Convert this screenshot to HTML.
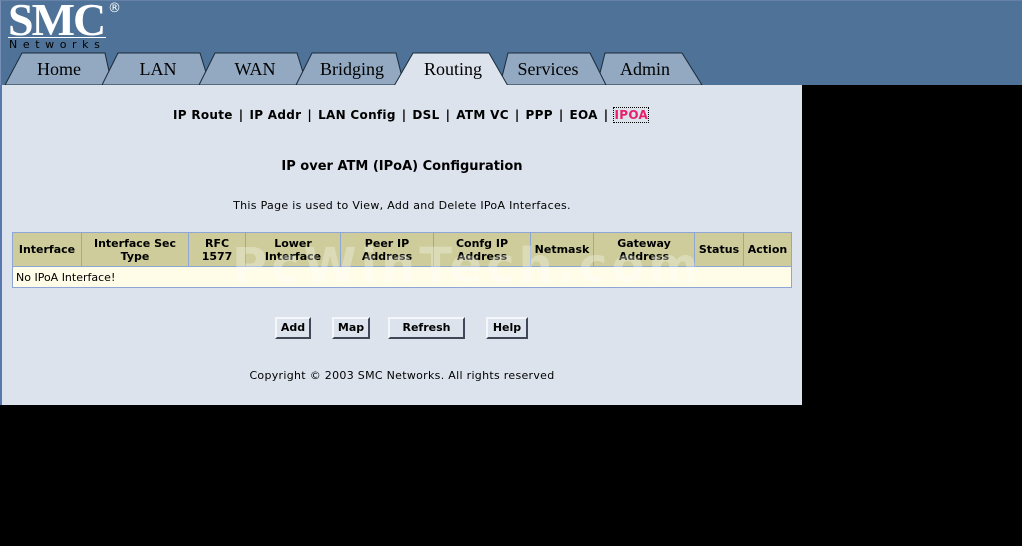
<!DOCTYPE html>
<html><head><meta charset="utf-8"><style>
*{margin:0;padding:0;box-sizing:border-box}
body{width:1022px;height:546px;background:#000;position:relative;overflow:hidden;font-family:"DejaVu Sans","Liberation Sans",sans-serif;}
.hdr{position:absolute;left:0;top:0;width:1022px;height:85px;background:#4f7398;border-left:1px solid #7890b8;border-top:1px solid #6680a8}
.content{position:absolute;left:0;top:85px;width:802px;height:320px;background:#dce3ec;border-left:2px solid #5a78b0}
.a{position:absolute;white-space:nowrap}
.nav{font-size:12px;font-weight:bold;color:#000;top:108px;left:173px;letter-spacing:0.3px}
.nav span{margin:0 6px}
table{position:absolute;left:12px;top:232px;width:780px;border-collapse:collapse;font-size:11px}
td{border:1px solid #8ea6d6;text-align:center;font-weight:bold;background:#cdcc9a;line-height:13px;padding:0}
.btn{position:absolute;top:317px;height:22px;background:#dce3ec;border:2px solid;border-color:#f4f6fa #404858 #404858 #f4f6fa;font-size:11px;font-weight:bold;text-align:center;line-height:18px}
</style></head><body>
<div class="hdr"></div>
<div class="a" style="left:8px;top:-7px;font-family:'Liberation Serif',serif;font-weight:bold;font-size:46px;color:#fff;letter-spacing:-2px">SMC</div>
<div class="a" style="left:108px;top:1px;font-size:13px;color:#fff">®</div>
<div style="position:absolute;left:8px;top:37px;width:98px;height:1px;background:#fff"></div>
<div class="a" style="left:9px;top:38px;font-size:11px;color:#000;letter-spacing:5.6px">Networks</div>
<svg style="position:absolute;left:0;top:0" width="1022" height="86">
<g stroke="#1a2a3a" stroke-width="1">
<polygon points="5,85 22,53 105,53 112,85" fill="#92a9c1"/>
<polygon points="102,85 118,53 200,53 210,85" fill="#92a9c1"/>
<polygon points="199,85 215,53 297,53 307,85" fill="#92a9c1"/>
<polygon points="296,85 312,53 396,53 404,85" fill="#92a9c1"/>
<polygon points="597,85 605,53 682,53 702,85" fill="#92a9c1"/>
<polygon points="500,85 508,53 590,53 606,85" fill="#92a9c1"/>
<polygon points="394,86 413,53 489,53 508,86" fill="#dce3ec"/>
</g>
<g font-family="Liberation Serif,serif" font-size="18" text-anchor="middle" fill="#000">
<text x="59" y="75">Home</text><text x="158" y="75">LAN</text><text x="255" y="75">WAN</text>
<text x="352" y="75">Bridging</text><text x="453" y="75">Routing</text><text x="548" y="75">Services</text><text x="645" y="75">Admin</text>
</g></svg>
<div class="content"></div>
<div class="a nav">IP Route<span>|</span>IP Addr<span>|</span>LAN Config<span>|</span>DSL<span>|</span>ATM VC<span>|</span>PPP<span>|</span>EOA<span>|</span><u style="color:#e8206a;text-decoration:none;outline:1px dotted #000">IPOA</u></div>
<div class="a" style="left:0;width:804px;text-align:center;top:159px;font-size:13px;font-weight:bold">IP over ATM (IPoA) Configuration</div>
<div class="a" style="left:0;width:804px;text-align:center;top:199px;font-size:11px;letter-spacing:0.3px">This Page is used to View, Add and Delete IPoA Interfaces.</div>
<table>
<tr style="height:34px"><td style="width:69px">Interface</td><td style="width:107px">Interface Sec<br>Type</td><td style="width:57px">RFC<br>1577</td><td style="width:95px">Lower<br>Interface</td><td style="width:93px">Peer IP<br>Address</td><td style="width:97px">Confg IP<br>Address</td><td style="width:63px">Netmask</td><td style="width:101px">Gateway<br>Address</td><td style="width:49px">Status</td><td>Action</td></tr>
<tr style="height:21px"><td colspan="10" style="text-align:left;font-weight:normal;background:#fffce8;padding-left:3px">No IPoA Interface!</td></tr>
</table>
<div class="a" style="left:232px;top:238px;font-size:48px;font-weight:bold;color:rgba(255,255,255,0.3);letter-spacing:4px">PcWinTech.com</div>
<div class="btn" style="left:275px;width:36px">Add</div>
<div class="btn" style="left:332px;width:38px">Map</div>
<div class="btn" style="left:388px;width:77px">Refresh</div>
<div class="btn" style="left:486px;width:42px">Help</div>
<div class="a" style="left:0;width:804px;text-align:center;top:369px;font-size:11px;letter-spacing:0.3px">Copyright © 2003 SMC Networks. All rights reserved</div>
</body></html>
